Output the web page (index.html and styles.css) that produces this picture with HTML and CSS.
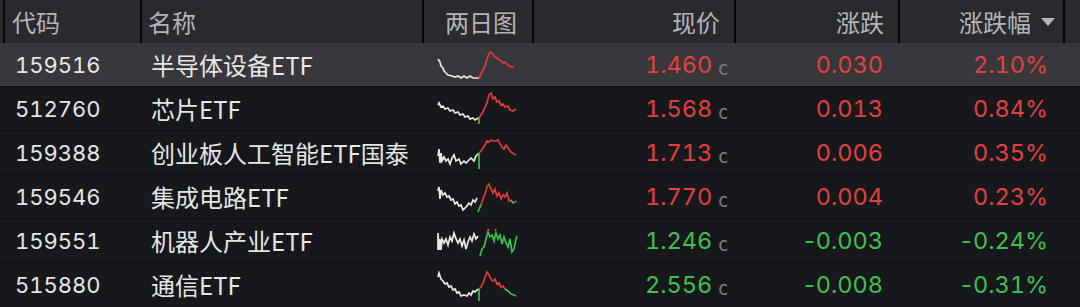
FILE: index.html
```html
<!DOCTYPE html>
<html lang="zh-CN">
<head>
<meta charset="utf-8">
<title>ETF 行情</title>
<link rel="stylesheet" href="styles.css">
</head>
<body>
<div class="table">
  <div class="row head">
    <div class="cell lead"></div>
    <div class="cell code">代码</div>
    <div class="cell name">名称</div>
    <div class="cell chart">两日图</div>
    <div class="cell num price">现价</div>
    <div class="cell num chg">涨跌</div>
    <div class="cell num pct">涨跌幅<span class="sort"></span></div>
    <div class="cell tail"></div>
  </div>

  <div class="row body sel">
    <div class="cell lead"></div>
    <div class="cell code">159516</div>
    <div class="cell name">半导体设备ETF</div>
    <div class="cell chart">
      <svg class="spark" viewBox="0 0 84 44" width="84" height="44">
        <polyline class="w" points="2,16 4,19 5,23 7,25 8,28 10,30 12,32 16,33 19,34 22,33 25,35 28,33 31,35 34,33 37,35 41,35 43,35"/>
        <polyline class="r" points="43,35 45,31 47,27 49,23 50,19 52,13 54,9 57,11 59,14 62,16 65,18 67,20 69,19 72,22 75,24 78,24"/>
      </svg>
    </div>
    <div class="cell num price up">1.460<span class="c">c</span></div>
    <div class="cell num chg up">0.030</div>
    <div class="cell num pct up">2.10%</div>
    <div class="cell tail"></div>
  </div>

  <div class="row body">
    <div class="cell lead"></div>
    <div class="cell code">512760</div>
    <div class="cell name">芯片ETF</div>
    <div class="cell chart">
      <svg class="spark" viewBox="0 0 84 44" width="84" height="44">
        <polyline class="w" points="2,18 3,16 5,20 7,19 9,22 12,21 14,24 17,23 19,26 22,25 24,28 27,27 29,30 32,29 34,32 37,31 39,33 42,31 43,31"/>
        <polyline class="g" points="43,31 43,37"/>
        <polyline class="r" points="43,31 45,28 47,25 49,20 51,16 53,8 55,6 57,12 59,10 61,15 63,14 65,18 67,17 69,20 72,19 74,23 77,24 80,22"/>
      </svg>
    </div>
    <div class="cell num price up">1.568<span class="c">c</span></div>
    <div class="cell num chg up">0.013</div>
    <div class="cell num pct up">0.84%</div>
    <div class="cell tail"></div>
  </div>

  <div class="row body">
    <div class="cell lead"></div>
    <div class="cell code">159388</div>
    <div class="cell name">创业板人工智能ETF国泰</div>
    <div class="cell chart">
      <svg class="spark" viewBox="0 0 84 44" width="84" height="44">
        <polyline class="w" points="2,25 3,18 4,32 5,22 6,30 8,26 10,30 12,28 14,33 16,27 18,24 20,30 23,28 25,33 28,30 30,32 33,29 35,27 38,30 40,25 43,22"/>
        <polyline class="g" points="43,22 43,38"/>
        <polyline class="r" points="43,22 45,20 47,17 49,14 51,10 53,11 55,9 57,10 60,10 62,9 64,13 66,16 68,18 70,14 72,17 75,21 78,23 80,24"/>
      </svg>
    </div>
    <div class="cell num price up">1.713<span class="c">c</span></div>
    <div class="cell num chg up">0.006</div>
    <div class="cell num pct up">0.35%</div>
    <div class="cell tail"></div>
  </div>

  <div class="row body">
    <div class="cell lead"></div>
    <div class="cell code">159546</div>
    <div class="cell name">集成电路ETF</div>
    <div class="cell chart">
      <svg class="spark" viewBox="0 0 84 44" width="84" height="44">
        <polyline class="w" points="2,16 3,12 4,24 5,15 7,20 9,18 11,22 13,21 15,25 17,24 19,29 21,27 23,31 25,30 27,35 29,33 31,31 33,28 35,30 37,25 39,27 41,23"/>
        <polyline class="g" points="42,37 44,32 45,30"/>
        <polyline class="r" points="45,30 47,24 49,19 51,12 53,9 55,14 57,18 59,14 61,21 63,18 65,24 67,20 69,22 71,18 73,26 75,25"/>
        <polyline class="g" points="75,25 77,28 79,27"/>
        <polyline class="r" points="79,27 81,26"/>
      </svg>
    </div>
    <div class="cell num price up">1.770<span class="c">c</span></div>
    <div class="cell num chg up">0.004</div>
    <div class="cell num pct up">0.23%</div>
    <div class="cell tail"></div>
  </div>

  <div class="row body">
    <div class="cell lead"></div>
    <div class="cell code">159551</div>
    <div class="cell name">机器人产业ETF</div>
    <div class="cell chart">
      <svg class="spark" viewBox="0 0 84 44" width="84" height="44">
        <polyline class="w" points="2,31 2,14 3,31 4,20 5,31 6,20 8,24 10,20 12,26 14,18 16,22 18,14 20,20 22,24 24,20 26,27 28,21 30,30 32,23 34,18 36,22 38,15 40,20 42,17"/>
        <polyline class="g" points="44,37 46,30 48,28 50,20 52,13 54,18 56,16 58,22 60,14 62,20 64,16 66,25 68,18 70,24 72,28 74,20 76,33 78,30 80,20 81,17"/>
        <polyline class="r" points="51,13 53,10"/>
        <polyline class="r" points="59,12 60,10"/>
      </svg>
    </div>
    <div class="cell num price down">1.246<span class="c">c</span></div>
    <div class="cell num chg down"><span class="sign">-</span>0.003</div>
    <div class="cell num pct down"><span class="sign">-</span>0.24%</div>
    <div class="cell tail"></div>
  </div>

  <div class="row body">
    <div class="cell lead"></div>
    <div class="cell code">515880</div>
    <div class="cell name">通信ETF</div>
    <div class="cell chart">
      <svg class="spark" viewBox="0 0 84 44" width="84" height="44">
        <polyline class="w" points="2,14 3,10 5,16 7,18 9,21 11,20 13,24 15,23 17,27 19,26 21,30 23,29 25,33 28,32 31,33 33,30 35,32 37,28 39,29 41,27 43,26"/>
        <polyline class="g" points="43,26 43,38"/>
        <polyline class="r" points="43,26 45,24 47,20 49,14 51,9 53,12 55,16 57,18 59,16 61,21 63,20 65,24 67,23 69,26"/>
        <polyline class="g" points="69,26 72,28 75,31 78,32 80,33"/>
      </svg>
    </div>
    <div class="cell num price down">2.556<span class="c">c</span></div>
    <div class="cell num chg down"><span class="sign">-</span>0.008</div>
    <div class="cell num pct down"><span class="sign">-</span>0.31%</div>
    <div class="cell tail"></div>
  </div>
</div>
</body>
</html>
```

FILE: styles.css
```css
* { box-sizing: border-box; }

html, body {
  margin: 0;
  padding: 0;
  background: #17181c;
}

body {
  width: 1080px;
  height: 307px;
  overflow: hidden;
  font-family: "Noto Sans CJK SC", "Noto Sans", sans-serif;
  font-size: 24px;
  color: #e6e6e6;
}

.table {
  display: flex;
  flex-direction: column;
  border-bottom: 2px solid #3a3a3f;
}

.row {
  display: grid;
  grid-template-columns: 3px 137px 282px 110px 202px 164px 165px 17px;
}

.cell {
  display: flex;
  align-items: center;
  white-space: nowrap;
  line-height: 1;
}

.head {
  height: 43px;
  background: #2a2a2e;
  color: #b4b4b8;
}

.head .cell + .cell {
  border-left: 2px solid #050506;
}

.head .code { padding-left: 7px; }
.head .name { padding-left: 6px; }
.head .chart { justify-content: flex-end; padding-right: 15px; }
.head .num { justify-content: flex-end; }
.head .price { padding-right: 14px; }
.head .chg { padding-right: 14px; }
.head .pct { padding-right: 8px; }

.sort {
  width: 0;
  height: 0;
  margin-left: 10px;
  border-left: 7px solid transparent;
  border-right: 7px solid transparent;
  border-top: 8px solid #b4b4b8;
}

.body {
  height: 44px;
  border-bottom: 1px solid #0c0d10;
  background: #17181c;
}

.body.sel {
  background: #37373c;
}

.body:last-child {
  border-bottom: none;
}

.body .code,
.body .num {
  font-family: Inter, "Noto Sans CJK SC", sans-serif;
  font-variant-numeric: tabular-nums;
  font-size: 23.5px;
}

.body .code {
  font-size: 22px;
  padding-left: 12px;
}
.body .name { padding-left: 11px; }
.body .chart { padding-left: 14px; }
.body .num { justify-content: flex-end; }
.body .price { padding-right: 6px; }
.body .chg { padding-right: 15px; }
.body .pct { padding-right: 15px; }

.sign {
  font-variant-numeric: normal;
  margin-right: 1px;
}

.spark {
  display: block;
}

.spark polyline {
  fill: none;
  stroke-width: 1.7;
  stroke-linejoin: miter;
}

.spark .w { stroke: #e8e8e8; }
.spark .r { stroke: #e03a3a; }
.spark .g { stroke: #3cbf4a; }

.up { color: #e2403e; }
.down { color: #42bf4e; }

.c {
  color: #7c7c80;
  font-family: "Noto Sans CJK SC", sans-serif;
  font-size: 19px;
  margin-left: 6px;
  padding-top: 3px;
}
```
